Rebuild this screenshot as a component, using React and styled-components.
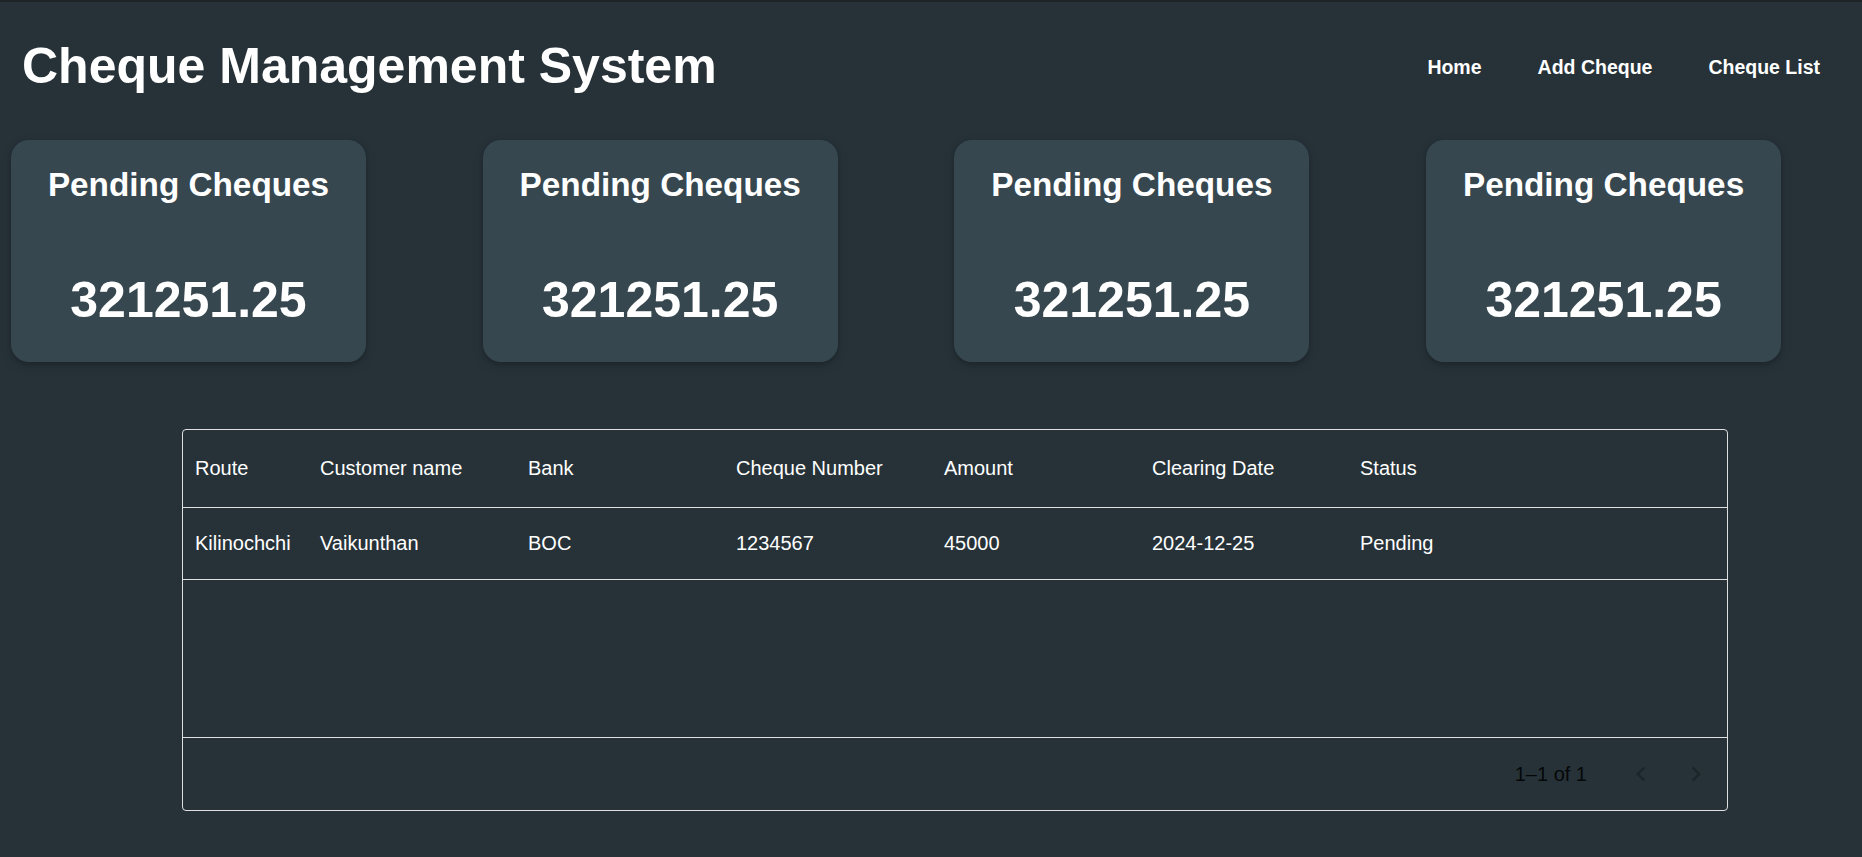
import styled, { createGlobalStyle } from "styled-components";

const GlobalStyle = createGlobalStyle`
  html, body {
    margin: 0;
    padding: 0;
    background: #263238;
    font-family: "Liberation Sans", Arial, sans-serif;
  }
  * {
    box-sizing: border-box;
  }
`;

const columns = [
  { key: "route", label: "Route" },
  { key: "customer", label: "Customer name" },
  { key: "bank", label: "Bank" },
  { key: "number", label: "Cheque Number" },
  { key: "amount", label: "Amount" },
  { key: "date", label: "Clearing Date" },
  { key: "status", label: "Status" },
];

const rows = [
  {
    route: "Kilinochchi",
    customer: "Vaikunthan",
    bank: "BOC",
    number: "1234567",
    amount: "45000",
    date: "2024-12-25",
    status: "Pending",
  },
];

const cards = [
  { title: "Pending Cheques", value: "321251.25" },
  { title: "Pending Cheques", value: "321251.25" },
  { title: "Pending Cheques", value: "321251.25" },
  { title: "Pending Cheques", value: "321251.25" },
];

const ChevronLeft = () => (
  <svg viewBox="0 0 24 24" width="30" height="30" fill="currentColor">
    <path d="M15.41 16.59L10.83 12l4.58-4.59L14 6l-6 6 6 6 1.41-1.41z" />
  </svg>
);

const ChevronRight = () => (
  <svg viewBox="0 0 24 24" width="30" height="30" fill="currentColor">
    <path d="M8.59 16.59L13.17 12 8.59 7.41 10 6l6 6-6 6-1.41-1.41z" />
  </svg>
);

const App = () => {
  return (
    <Page>
      <GlobalStyle />
      <Header>
        <Title>Cheque Management System</Title>
        <Nav>
          <NavLink href="#">Home</NavLink>
          <NavLink href="#">Add Cheque</NavLink>
          <NavLink href="#">Cheque List</NavLink>
        </Nav>
      </Header>

      <Cards>
        {cards.map((card, i) => (
          <Card key={i}>
            <CardTitle>{card.title}</CardTitle>
            <CardValue>{card.value}</CardValue>
          </Card>
        ))}
      </Cards>

      <Grid>
        <HeadRow>
          {columns.map((col) => (
            <Cell key={col.key}>{col.label}</Cell>
          ))}
        </HeadRow>
        {rows.map((row, i) => (
          <BodyRow key={i}>
            {columns.map((col) => (
              <Cell key={col.key}>{row[col.key]}</Cell>
            ))}
          </BodyRow>
        ))}
        <Filler />
        <Footer>
          <PageInfo>1–1 of 1</PageInfo>
          <Actions>
            <PageButton disabled aria-label="Go to previous page">
              <ChevronLeft />
            </PageButton>
            <PageButton disabled aria-label="Go to next page">
              <ChevronRight />
            </PageButton>
          </Actions>
        </Footer>
      </Grid>
    </Page>
  );
};

export default App;

const Page = styled.div`
  min-height: 100vh;
  border-top: 2px solid #1f2427;
`;

const Header = styled.header`
  display: flex;
  justify-content: space-between;
  align-items: center;
  padding: 34px 42px 0 22px;
`;

const Title = styled.h1`
  margin: 0;
  font-size: 50px;
  line-height: 60px;
  font-weight: bold;
  color: #ffffff;
`;

const Nav = styled.nav`
  display: flex;
  gap: 56px;
  padding-top: 2px;
`;

const NavLink = styled.a`
  color: #ffffff;
  font-size: 19.5px;
  line-height: 24px;
  font-weight: bold;
  text-decoration: none;
`;

const Cards = styled.section`
  display: flex;
  gap: 116.7px;
  margin-top: 44px;
  padding-left: 11px;
`;

const Card = styled.div`
  width: 355px;
  height: 222px;
  padding-top: 25px;
  background-color: #37474f;
  border-radius: 18px;
  text-align: center;
  color: #ffffff;
  box-shadow: 0 2px 4px rgba(0, 0, 0, 0.18), 0 4px 12px rgba(0, 0, 0, 0.12);
`;

const CardTitle = styled.h2`
  margin: 0;
  font-size: 33.3px;
  line-height: 40px;
  font-weight: bold;
`;

const CardValue = styled.div`
  margin-top: 65px;
  font-size: 50px;
  line-height: 60px;
  font-weight: bold;
`;

const Grid = styled.div`
  width: 1546px;
  margin: 67px 0 0 182px;
  border: 1px solid #e0e0e0;
  border-radius: 4px;
  color: #ffffff;
`;

const Row = styled.div`
  display: grid;
  grid-template-columns: 125px repeat(6, 208px) 1fr;
  border-bottom: 1px solid #e0e0e0;
`;

const HeadRow = styled(Row)`
  height: 78px;
`;

const BodyRow = styled(Row)`
  height: 72px;
`;

const Cell = styled.div`
  display: flex;
  align-items: center;
  padding: 0 12px;
  font-size: 20px;
  white-space: nowrap;
  overflow: hidden;
`;

const Filler = styled.div`
  height: 158px;
  border-bottom: 1px solid #e0e0e0;
`;

const Footer = styled.div`
  display: flex;
  justify-content: flex-end;
  align-items: center;
  height: 72px;
  padding-right: 6px;
`;

const PageInfo = styled.span`
  font-size: 20px;
  color: rgba(0, 0, 0, 0.87);
`;

const Actions = styled.div`
  display: flex;
  gap: 5px;
  margin-left: 29px;
`;

const PageButton = styled.button`
  width: 50px;
  height: 50px;
  padding: 0;
  display: flex;
  align-items: center;
  justify-content: center;
  background: transparent;
  border: none;
  border-radius: 50%;
  color: rgba(0, 0, 0, 0.26);
`;
